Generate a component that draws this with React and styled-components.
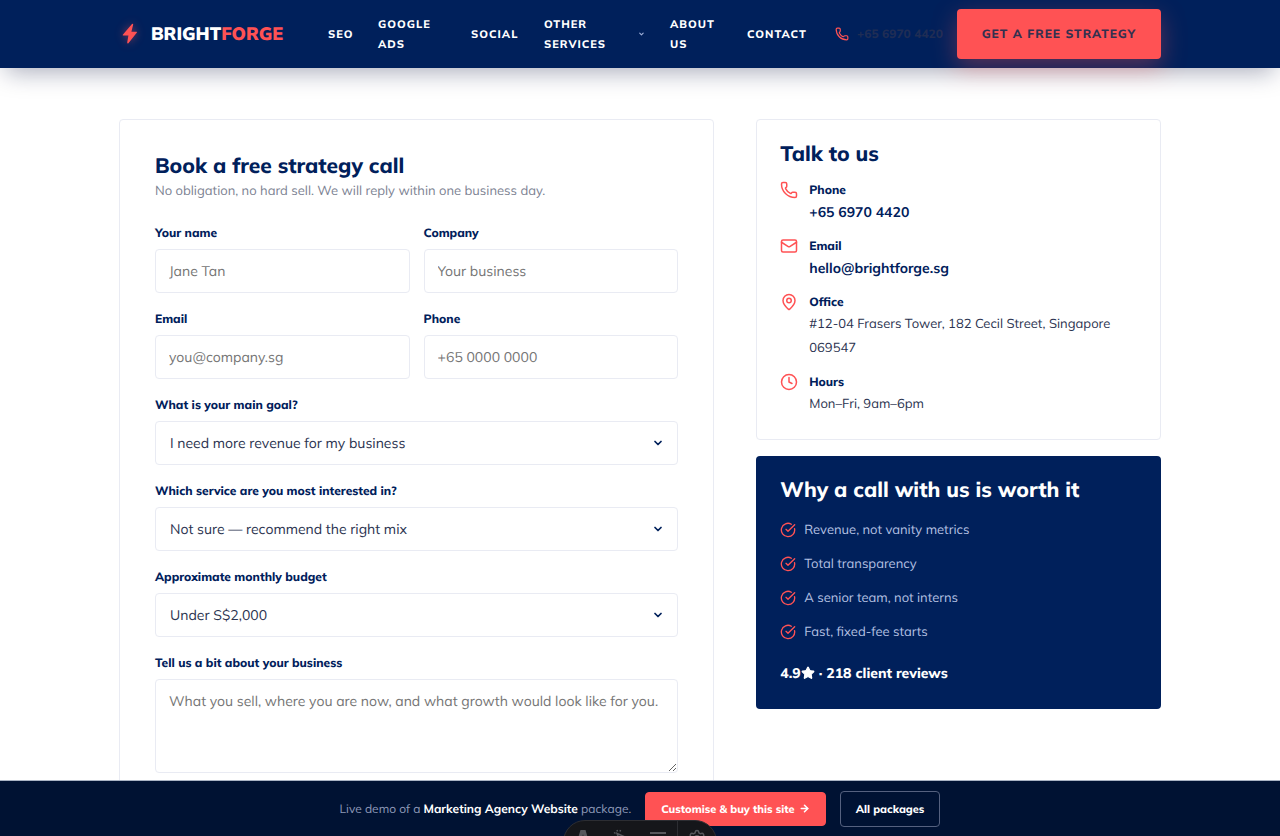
import React from "react";
import styled, { createGlobalStyle } from "styled-components";
import {
  Phone,
  Mail,
  MapPin,
  Clock,
  CircleCheckBig,
  ChevronDown,
  ArrowRight,
  Star,
  Settings,
} from "lucide-react";

const navy = "#00205b";
const coral = "#ff5254";
const line = "#e9ebf3";

const GlobalStyle = createGlobalStyle`
  * {
    box-sizing: border-box;
  }

  body {
    margin: 0;
    background: #fff;
    color: #2b3350;
    font-family: "Mulish", "Open Sans", "Noto Sans", sans-serif;
    font-size: 13px;
    text-rendering: geometricPrecision;
  }

  a {
    color: inherit;
    text-decoration: none;
  }

  h2, p, ul {
    margin: 0;
    padding: 0;
  }
`;

const Page = styled.div`
  position: relative;
  display: flex;
  flex-direction: column;
  height: 100vh;
  overflow: hidden;
`;

const Header = styled.header`
  position: relative;
  z-index: 2;
  flex: none;
  background: ${navy};
  box-shadow: 0 10px 24px -6px rgba(10, 16, 60, 0.35);
`;

const HeaderInner = styled.div`
  display: flex;
  align-items: center;
  max-width: 1042px;
  min-height: 68px;
  margin: 0 auto;
`;

const Logo = styled.a`
  display: flex;
  align-items: center;
  gap: 10px;
  width: 209px;
  color: #fff;
  font-size: 18px;
  font-weight: 900;
  line-height: 24px;

  svg {
    filter: drop-shadow(0 0 4px rgba(255, 82, 84, 0.5));
  }

  span span {
    color: ${coral};
  }
`;

const Nav = styled.nav`
  display: flex;
  flex: 1;
  align-items: center;
  gap: 25px;
`;

const NavLink = styled.a`
  display: flex;
  align-items: center;
  justify-content: space-between;
  width: ${(props) => props.$width}px;
  color: #fff;
  font-size: 11px;
  font-weight: 800;
  letter-spacing: 1px;
  line-height: 20px;
`;

const HeaderPhone = styled.a`
  display: flex;
  align-items: center;
  gap: 8px;
  margin-right: 14px;
  color: #1f2d55;
  font-size: 12px;
  font-weight: 800;
  line-height: 20px;
  white-space: nowrap;

  svg {
    color: ${coral};
  }
`;

const HeaderButton = styled.a`
  display: flex;
  align-items: center;
  justify-content: center;
  width: 204px;
  height: 50px;
  border-radius: 4px;
  background: ${coral};
  box-shadow: 0 8px 24px rgba(255, 82, 84, 0.35);
  color: #33304f;
  font-size: 12px;
  font-weight: 800;
  letter-spacing: 1px;
  line-height: 20px;
  white-space: nowrap;
`;

const Main = styled.main`
  flex: 1;
  min-height: 0;
  overflow-y: auto;
  scrollbar-width: none;
`;

const Columns = styled.div`
  display: grid;
  grid-template-columns: minmax(0, 25fr) minmax(0, 17fr);
  align-items: start;
  gap: 42px;
  max-width: 1042px;
  margin: 0 auto;
  padding: 51px 0;
`;

const FormCard = styled.form`
  padding: 32px 35px;
  border: 1px solid ${line};
  border-radius: 4px;
`;

const Title = styled.h2`
  color: ${(props) => (props.$light ? "#fff" : navy)};
  font-size: 21px;
  font-weight: 800;
  line-height: 28px;
`;

const Intro = styled.p`
  margin-bottom: 21px;
  color: #7c8292;
  font-size: 13px;
  line-height: 22px;
`;

const Fields = styled.div`
  display: grid;
  grid-template-columns: repeat(2, minmax(0, 1fr));
  gap: 16px 14px;
`;

const FieldBox = styled.div`
  display: flex;
  flex-direction: column;
  gap: 6px;
  grid-column: ${(props) => (props.$wide ? "1 / -1" : "auto")};

  label {
    color: ${navy};
    font-size: 12px;
    font-weight: 800;
    line-height: 20px;
  }

  input,
  select,
  textarea {
    display: block;
    width: 100%;
    height: 44px;
    margin: 0;
    padding: 0 14px;
    border: 1px solid ${line};
    border-radius: 4px;
    background: #fff;
    color: #2b3350;
    font-family: inherit;
    font-size: 14px;
    text-rendering: inherit;

    &:focus {
      border-color: ${navy};
      outline: none;
    }
  }

  input,
  textarea {
    padding: 0 13px;
  }

  textarea {
    height: 94px;
    padding: 10px 13px;
    line-height: 22px;
    resize: vertical;
  }

  ::placeholder {
    color: #757575;
  }
`;

const SelectBox = styled.div`
  display: grid;
  align-items: center;

  select,
  svg {
    grid-area: 1 / 1;
  }

  select {
    appearance: none;
  }

  svg {
    justify-self: end;
    margin-right: 14px;
    color: ${navy};
    pointer-events: none;
  }
`;

const Side = styled.aside`
  display: grid;
  gap: 16px;
`;

const ContactCard = styled.section`
  padding: 20px 23px 23px;
  border: 1px solid ${line};
  border-radius: 4px;
`;

const ContactList = styled.ul`
  display: grid;
  gap: 12px;
  margin-top: 12px;
  list-style: none;
`;

const ContactItem = styled.li`
  display: flex;
  gap: 11px;

  svg {
    flex: none;
    margin-top: 1px;
    color: ${coral};
  }

  strong {
    display: block;
    color: ${navy};
    font-size: 12px;
    font-weight: 800;
    line-height: 20px;
  }

  a,
  span {
    display: block;
    font-size: 13px;
    line-height: 24px;
  }

  a {
    color: ${navy};
    font-size: 14px;
    font-weight: 700;
  }
`;

const WhyCard = styled.section`
  padding: 20px 24px 24px;
  border-radius: 4px;
  background: ${navy};
`;

const WhyList = styled.ul`
  display: grid;
  gap: 12px;
  margin: 15px 0 18px;
  list-style: none;

  li {
    display: flex;
    align-items: center;
    gap: 8px;
    color: #b5c1e2;
    font-size: 13px;
    line-height: 22px;
  }

  svg {
    color: ${coral};
  }
`;

const Rating = styled.p`
  color: #fff;
  font-size: 14px;
  font-weight: 800;
  line-height: 24px;

  svg {
    vertical-align: -2px;
  }
`;

const DemoBar = styled.footer`
  display: flex;
  flex: none;
  align-items: center;
  justify-content: center;
  gap: 14px;
  min-height: 56px;
  border-top: 1px solid #a9b3c4;
  background: #001233;
  color: #8d99b8;
  font-size: 12px;

  strong {
    color: #fff;
    font-weight: 700;
  }
`;

const BarLink = styled.a`
  display: flex;
  align-items: center;
  gap: 4px;
  height: ${(props) => (props.$primary ? 34 : 36)}px;
  padding: 0 15px;
  border: 1px solid ${(props) => (props.$primary ? coral : "#55617f")};
  border-radius: 4px;
  background: ${(props) => (props.$primary ? coral : "transparent")};
  color: #fff;
  font-size: 11px;
  font-weight: 800;
`;

const Tools = styled.div`
  position: absolute;
  bottom: -28px;
  left: 50%;
  z-index: 3;
  display: flex;
  width: 154px;
  height: 44px;
  border: 1px solid #2c2d32;
  border-radius: 22px;
  background: #15161a;
  transform: translateX(-50%);
`;

const Tool = styled.button`
  display: flex;
  flex: 1;
  align-items: flex-start;
  justify-content: center;
  padding: 8px 0 0;
  border: 0;
  border-left: ${(props) => (props.$divided ? "1px solid #2c2d32" : "0")};
  background: none;
  color: #56575c;
`;

const links = [
  { text: "SEO", width: 25 },
  { text: "GOOGLE ADS", width: 68 },
  { text: "SOCIAL", width: 48 },
  { text: "OTHER SERVICES", width: 101, menu: true },
  { text: "ABOUT US", width: 52 },
  { text: "CONTACT", width: 60 },
];

const reasons = [
  "Revenue, not vanity metrics",
  "Total transparency",
  "A senior team, not interns",
  "Fast, fixed-fee starts",
];

function Field({ id, label, ...rest }) {
  return (
    <FieldBox>
      <label htmlFor={id}>{label}</label>
      <input id={id} name={id} {...rest} />
    </FieldBox>
  );
}

function SelectField({ id, label, option }) {
  return (
    <FieldBox $wide>
      <label htmlFor={id}>{label}</label>
      <SelectBox>
        <select id={id} name={id}>
          <option>{option}</option>
        </select>
        <ChevronDown size={12} strokeWidth={3.5} />
      </SelectBox>
    </FieldBox>
  );
}

export default function App() {
  return (
    <Page>
      <GlobalStyle />
      <Header>
        <HeaderInner>
          <Logo href="#">
            <svg width="22" height="22" viewBox="0 0 22 22" fill={coral}>
              <path d="M13 1 L3.8 11.8 Q3.4 12.6 4.2 12.6 H9.4 L8.2 19.6 Q8.4 21 9.4 20.2 L17.9 9.6 Q18.3 8.8 17.5 8.8 H12.4 L14.2 1.6 Q14 0.2 13 1 Z" />
            </svg>
            <span>
              BRIGHT<span>FORGE</span>
            </span>
          </Logo>
          <Nav>
            {links.map((link) => (
              <NavLink href="#" key={link.text} $width={link.width}>
                {link.text}
                {link.menu && <ChevronDown size={8} strokeWidth={4} color="#9fb0d8" />}
              </NavLink>
            ))}
          </Nav>
          <HeaderPhone href="#">
            <Phone size={14} />
            +65 6970 4420
          </HeaderPhone>
          <HeaderButton href="#">GET A FREE STRATEGY</HeaderButton>
        </HeaderInner>
      </Header>

      <Main>
        <Columns>
          <FormCard onSubmit={(e) => e.preventDefault()}>
            <Title>Book a free strategy call</Title>
            <Intro>No obligation, no hard sell. We will reply within one business day.</Intro>
            <Fields>
              <Field id="name" label="Your name" placeholder="Jane Tan" />
              <Field id="company" label="Company" placeholder="Your business" />
              <Field id="email" type="email" label="Email" placeholder="you@company.sg" />
              <Field id="phone" type="tel" label="Phone" placeholder="+65 0000 0000" />
              <SelectField
                id="goal"
                label="What is your main goal?"
                option="I need more revenue for my business"
              />
              <SelectField
                id="service"
                label="Which service are you most interested in?"
                option="Not sure — recommend the right mix"
              />
              <SelectField id="budget" label="Approximate monthly budget" option="Under S$2,000" />
              <FieldBox $wide>
                <label htmlFor="about">Tell us a bit about your business</label>
                <textarea
                  id="about"
                  name="about"
                  placeholder="What you sell, where you are now, and what growth would look like for you."
                ></textarea>
              </FieldBox>
            </Fields>
          </FormCard>

          <Side>
            <ContactCard>
              <Title>Talk to us</Title>
              <ContactList>
                <ContactItem>
                  <Phone size={18} />
                  <div>
                    <strong>Phone</strong>
                    <a href="#">+65 6970 4420</a>
                  </div>
                </ContactItem>
                <ContactItem>
                  <Mail size={18} />
                  <div>
                    <strong>Email</strong>
                    <a href="#">hello@brightforge.sg</a>
                  </div>
                </ContactItem>
                <ContactItem>
                  <MapPin size={18} />
                  <div>
                    <strong>Office</strong>
                    <span>#12-04 Frasers Tower, 182 Cecil Street, Singapore 069547</span>
                  </div>
                </ContactItem>
                <ContactItem>
                  <Clock size={18} />
                  <div>
                    <strong>Hours</strong>
                    <span>Mon–Fri, 9am–6pm</span>
                  </div>
                </ContactItem>
              </ContactList>
            </ContactCard>

            <WhyCard>
              <Title $light>Why a call with us is worth it</Title>
              <WhyList>
                {reasons.map((reason) => (
                  <li key={reason}>
                    <CircleCheckBig size={16} />
                    {reason}
                  </li>
                ))}
              </WhyList>
              <Rating>
                4.9
                <Star size={14} fill="currentColor" aria-label="stars" /> · 218 client reviews
              </Rating>
            </WhyCard>
          </Side>
        </Columns>
      </Main>

      <DemoBar>
        <span>
          Live demo of a <strong>Marketing Agency Website</strong> package.
        </span>
        <BarLink href="#" $primary>
          Customise &amp; buy this site
          <ArrowRight size={11} strokeWidth={3.5} />
        </BarLink>
        <BarLink href="#">All packages</BarLink>
      </DemoBar>

      <Tools>
        <Tool type="button" aria-label="Text">
          <svg width="16" height="16" viewBox="0 0 16 16" fill="currentColor">
            <path d="M5.5 1h5L15 16H1L5.5 1ZM8 5 6.8 11h2.4L8 5Z" fillRule="evenodd" />
          </svg>
        </Tool>
        <Tool type="button" aria-label="Select">
          <svg
            width="16"
            height="16"
            viewBox="0 0 16 16"
            fill="none"
            stroke="currentColor"
            strokeWidth="1.5"
          >
            <path d="M4 4.5 14.5 9 10 10.5 8 15 4 4.5ZM1 3.5l1.5 1M4 1l.5 1.5M7.5 1 7 2.5" />
          </svg>
        </Tool>
        <Tool type="button" aria-label="Menu">
          <svg width="18" height="16" viewBox="0 0 18 16" stroke="currentColor" strokeWidth="2">
            <path d="M1 4h16M6 9h11M1 14h16" />
          </svg>
        </Tool>
        <Tool type="button" aria-label="Settings" $divided>
          <Settings size={18} />
        </Tool>
      </Tools>
    </Page>
  );
}
